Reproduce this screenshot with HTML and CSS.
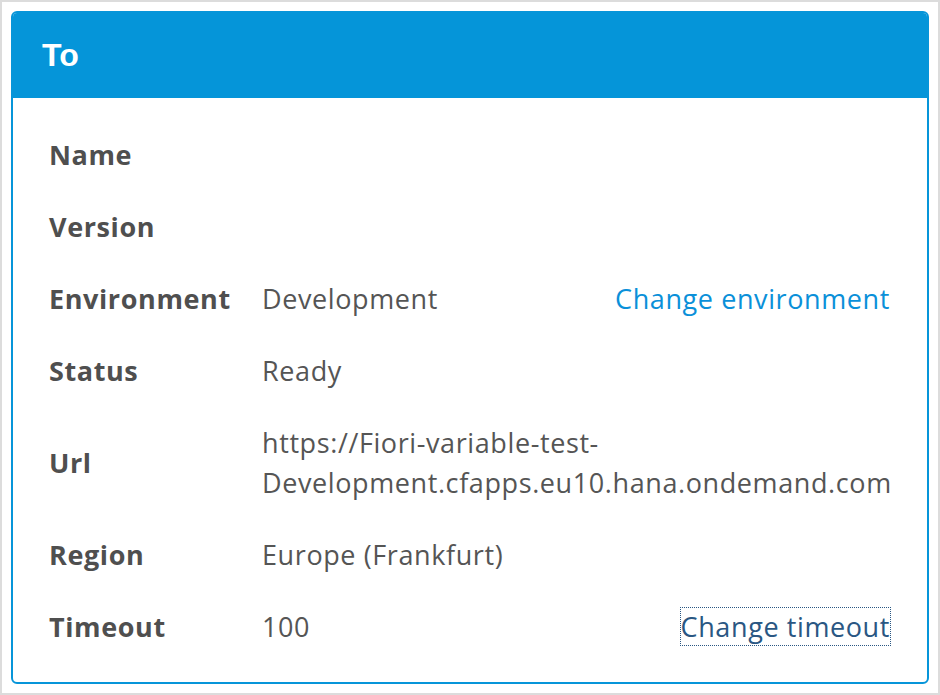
FILE: index.html
```html
<!DOCTYPE html>
<html lang="en">
<head>
<meta charset="utf-8">
<title>To</title>
<link rel="stylesheet" href="styles.css">
</head>
<body>
<div class="frame">
  <section class="card">
    <header class="card-header"><h1 class="card-title">To</h1></header>
    <div class="card-body">
      <div class="row">
        <div class="label">Name</div><div class="value"></div><div class="action"></div>
      </div>
      <div class="row">
        <div class="label">Version</div><div class="value"></div><div class="action"></div>
      </div>
      <div class="row">
        <div class="label">Environment</div><div class="value">Development</div><div class="action"><a class="link" href="#">Change environment</a></div>
      </div>
      <div class="row">
        <div class="label">Status</div><div class="value">Ready</div><div class="action"></div>
      </div>
      <div class="row">
        <div class="label">Url</div><div class="value">https://Fiori-variable-test-<br>Development.cfapps.eu10.hana.ondemand.com</div><div class="action"></div>
      </div>
      <div class="row">
        <div class="label">Region</div><div class="value">Europe (Frankfurt)</div><div class="action"></div>
      </div>
      <div class="row">
        <div class="label">Timeout</div><div class="value">100</div><div class="action"><a class="link link-focus" href="#">Change timeout</a></div>
      </div>
    </div>
  </section>
</div>
</body>
</html>
```
FILE: styles.css
```css
* { box-sizing: border-box; }
html, body { margin: 0; padding: 0; background: #fff; }
.frame {
  width: 940px;
  height: 695px;
  border: 2px solid #dcdcdc;
  padding: 9px;
}
.card {
  height: 100%;
  border: 2px solid #0795d9;
  border-radius: 6px;
  overflow: hidden;
  display: flex;
  flex-direction: column;
}
.card-header {
  background: #0595d9;
  height: 85px;
  display: flex;
  align-items: center;
  padding-left: 29px;
}
.card-title {
  margin: 0;
  color: #fff;
  font-family: "Liberation Sans", Arial, sans-serif;
  font-weight: bold;
  font-size: 32px;
}
.card-body {
  padding: 37px 37px 0 36px;
  display: flex;
  flex-direction: column;
  gap: 32px;
  font-family: "Open Sans", sans-serif;
  font-size: 27px;
  letter-spacing: 0.6px;
  line-height: 40px;
  color: #555;
}
.row {
  display: grid;
  grid-template-columns: 213px 1fr auto;
  align-items: center;
  min-height: 40px;
}
.label { font-weight: bold; color: #4f4f4f; }
.value { color: #555; }
.link {
  color: #0a90d9;
  text-decoration: none;
}
.link-focus {
  color: #2a5783;
  outline: 1px dotted #2a5783;
  outline-offset: 0;
}
```
